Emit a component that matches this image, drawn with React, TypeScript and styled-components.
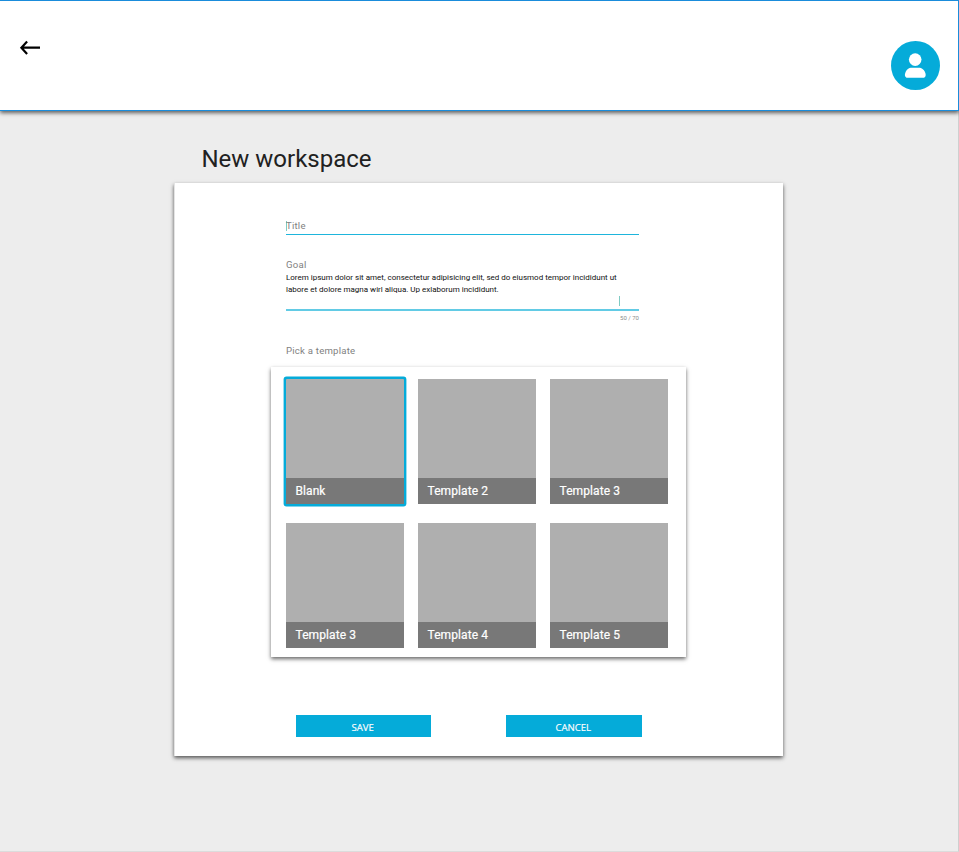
import React from 'react';
import styled, { createGlobalStyle } from 'styled-components';

const GlobalStyle = createGlobalStyle`
  * { box-sizing: border-box; }
  body { margin: 0; background: #ededed; font-family: Roboto, sans-serif; }
`;

const Page = styled.div`
  height: 852px;
  background: #ededed;
  border-right: 1px solid #cfcfcf;
  border-bottom: 1px solid #dcdcdc;
`;

const Header = styled.header`
  display: flex;
  justify-content: space-between;
  align-items: flex-start;
  height: 111px;
  margin-right: -1px;
  padding: 40px 18px 0 19px;
  background: #fff;
  border: 1px solid #1a8cdb;
  border-left: 0;
  box-shadow: 0 2px 4px rgba(0, 0, 0, 0.6);
`;

const BackButton = styled.button`
  display: flex;
  margin-top: -2px;
  padding: 0;
  border: 0;
  background: none;
`;

const Avatar = styled.div`
  display: flex;
  width: 49px;
  height: 49px;
`;

const Heading = styled.h1`
  height: 32px;
  margin: 32px 0 8px 201.5px;
  font-size: 24px;
  line-height: 32px;
  font-weight: 400;
  color: #212121;
`;

const Card = styled.main`
  width: 609px;
  height: 573px;
  margin-left: 174px;
  padding: 36px 96px 0;
  background: #fff;
  border-left: 1px solid #e4e4e4;
  box-shadow: 0 2px 4px rgba(0, 0, 0, 0.65);
`;

const Field = styled.section<{ $height: number; $gap?: number; $thick?: boolean }>`
  display: flex;
  flex-direction: column;
  width: 353px;
  height: ${(p) => p.$height}px;
  margin: ${(p) => p.$gap ?? 0}px 0 0 15px;
  border-bottom: ${(p) => (p.$thick ? '2px solid #62cbe5' : '1px solid #1eb5dc')};
`;

const Label = styled.label`
  height: 14px;
  font-size: 9.6px;
  line-height: 14px;
  letter-spacing: 0.22px;
  color: #818181;
`;

const TitleInput = styled.div`
  display: flex;
  align-items: center;
  height: 14px;
`;

const Caret = styled.span<{ $flush?: boolean }>`
  width: 1px;
  height: 10px;
  margin-right: ${(p) => (p.$flush ? '-1px' : '19px')};
  background: #80cbc4;
`;

const GoalText = styled.div`
  height: 24px;
  font-size: 8px;
  line-height: 12px;
  white-space: nowrap;
  color: #101010;
`;

const CaretRow = styled.div`
  display: flex;
  justify-content: flex-end;
`;

const Counter = styled.div`
  width: 368px;
  height: 12px;
  margin-top: 1px;
  font-size: 6px;
  line-height: 12px;
  text-align: right;
  color: #8b8b8b;
`;

const PickLabel = styled(Label)`
  display: block;
  height: 23px;
  margin: 20px 0 0 15px;
`;

const Templates = styled.div`
  display: grid;
  grid-template-columns: repeat(3, 118px);
  grid-auto-rows: 125px;
  column-gap: 14px;
  row-gap: 19px;
  width: 415px;
  height: 290px;
  padding: 12px 15px;
  background: #fff;
  box-shadow: 0 2px 4px rgba(0, 0, 0, 0.6);
`;

const Tile = styled.div<{ $selected?: boolean }>`
  display: flex;
  flex-direction: column;
  justify-content: flex-end;
  background: #afafaf;
  box-shadow: ${(p) => (p.$selected ? '0 0 0 2.4px #05abd9' : 'none')};
  border-radius: ${(p) => (p.$selected ? '1px' : '0')};
`;

const TileLabel = styled.div`
  height: 26px;
  padding-left: 9.5px;
  background: #787878;
  color: #fff;
  font-size: 12px;
  line-height: 26px;
  letter-spacing: 0.08px;
  -webkit-text-stroke: 0.2px #fff;
`;

const Actions = styled.div`
  display: flex;
  gap: 75px;
  margin: 58px 0 0 24.5px;
`;

const ActionButton = styled.button`
  width: 135.5px;
  height: 22px;
  padding: 3px 1px 0 0;
  border: 0;
  background: #05abd9;
  color: #fff;
  font: 400 9.6px/19px 'Open Sans', sans-serif;
  -webkit-text-stroke: 0.15px #fff;
`;

const templates = ['Blank', 'Template 2', 'Template 3', 'Template 3', 'Template 4', 'Template 5'];

export default function App() {
  return (
    <>
      <GlobalStyle />
      <Page>
        <Header>
          <BackButton aria-label="Back">
            <svg width="22" height="18" viewBox="0 0 22 18" fill="none" stroke="#000" strokeWidth="2.2">
              <path d="M21 8.7H2.5M8.1 2.5L2.4 8.7L8.1 14.9" />
            </svg>
          </BackButton>
          <Avatar>
            <svg width="49" height="49" viewBox="0 0 49 49">
              <circle cx="24.5" cy="24.5" r="24.5" fill="#05abd9" />
              <circle cx="24.2" cy="18.6" r="6.3" fill="#fff" />
              <path d="M19.6 26.7H28.8C31.4 26.7 34.7 30.6 34.7 34C34.7 35.9 33.5 36.8 32 36.8H16.6C15.1 36.8 13.9 35.9 13.9 34C13.9 30.6 17 26.7 19.6 26.7Z" fill="#fff" />
            </svg>
          </Avatar>
        </Header>
        <Heading>New workspace</Heading>
        <Card>
          <Field $height={16}>
            <TitleInput>
              <Caret $flush />
              <Label>Title</Label>
            </TitleInput>
          </Field>
          <Field $height={53} $gap={23} $thick>
            <Label>Goal</Label>
            <GoalText>
              Lorem ipsum dolor sit amet, consectetur adipisicing elit, sed do eiusmod tempor incididunt ut
              <br />
              labore et dolore magna wirl aliqua. Up exlaborum incididunt.
            </GoalText>
            <CaretRow>
              <Caret />
            </CaretRow>
          </Field>
          <Counter>50 / 70</Counter>
          <PickLabel>Pick a template</PickLabel>
          <Templates>
            {templates.map((name, i) => (
              <Tile key={i} $selected={i === 0}>
                <TileLabel>{name}</TileLabel>
              </Tile>
            ))}
          </Templates>
          <Actions>
            <ActionButton>SAVE</ActionButton>
            <ActionButton>CANCEL</ActionButton>
          </Actions>
        </Card>
      </Page>
    </>
  );
}
